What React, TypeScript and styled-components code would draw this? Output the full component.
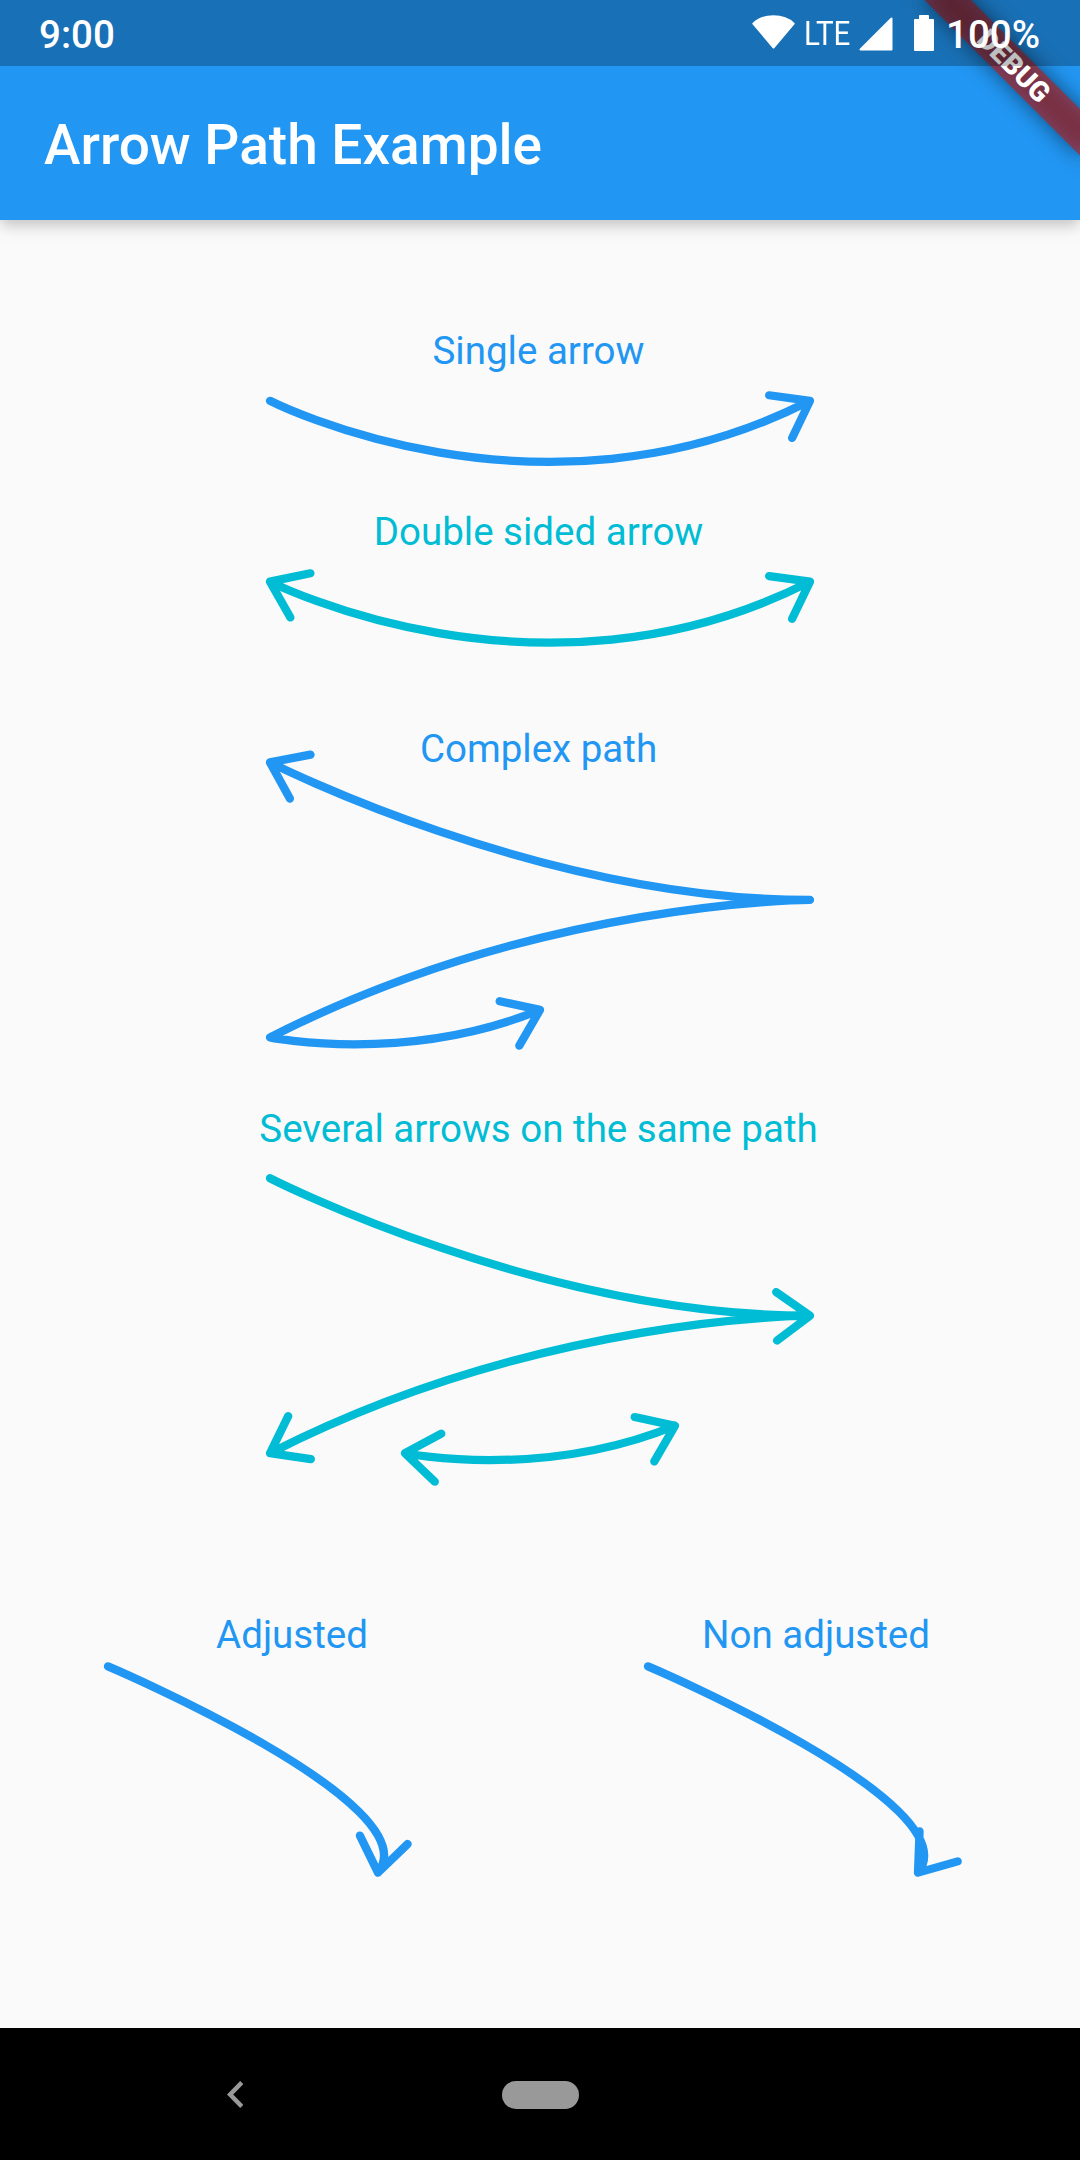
import React from 'react';
import styled, { createGlobalStyle } from 'styled-components';

const BLUE = '#2196f3';
const CYAN = '#00bcd4';

const GlobalStyle = createGlobalStyle`
  * { box-sizing: border-box; }
  body { margin: 0; background: #000; }
`;

const Screen = styled.div`
  position: relative;
  display: flex;
  flex-direction: column;
  width: 1080px;
  height: 2160px;
  overflow: hidden;
  background: #fafafa;
  font-family: Roboto, sans-serif;
`;

const AppBar = styled.header`
  display: flex;
  align-items: center;
  flex: none;
  height: 220px;
  padding: 70px 44px 0;
  background: ${BLUE};
  box-shadow: 0 6px 12px -2px rgba(0, 0, 0, 0.13), 0 8px 16px 0 rgba(0, 0, 0, 0.1);
`;

const Title = styled.h1`
  margin: 0;
  color: #fff;
  font-size: 55px;
  font-weight: 500;
  line-height: 64px;
`;

const BannerCorner = styled.div`
  position: absolute;
  top: 0;
  right: 0;
  width: 240px;
  height: 240px;
  overflow: hidden;
`;

const Ribbon = styled.div`
  position: absolute;
  top: 77px;
  right: -110px;
  display: flex;
  align-items: center;
  justify-content: center;
  width: 220px;
  height: 33px;
  transform: rotate(45deg);
  transform-origin: 110px -77px;

  &::before {
    content: '';
    position: absolute;
    inset: 0;
    background: rgba(0, 0, 0, 0.5);
    filter: blur(10.9px);
  }

  &::after {
    content: '';
    position: absolute;
    inset: 0;
    background: rgba(183, 28, 28, 0.627);
  }
`;

const RibbonText = styled.span`
  position: relative;
  z-index: 1;
  color: #fff;
  font-size: 28px;
  font-weight: 900;
  line-height: 28px;
`;

const StatusBar = styled.div`
  position: absolute;
  top: 0;
  left: 0;
  display: flex;
  align-items: center;
  width: 1080px;
  height: 66px;
  padding: 2px 40px 0 39px;
  background: rgba(0, 0, 0, 0.25);
  color: #fff;
  font-size: 38.5px;
  font-weight: 500;
`;

const StatusIcons = styled.div`
  display: flex;
  align-items: center;
  margin-left: auto;
`;

const Network = styled.span`
  width: 64px;
  padding-left: 9px;
  margin-bottom: 2px;
  font-size: 34px;
  font-weight: 400;
  white-space: nowrap;
  transform: scaleX(0.87);
  transform-origin: 9px 50%;
`;

const StatusGlyph = styled.svg<{ $gap?: number; $lift?: number }>`
  display: block;
  flex: none;
  margin-right: ${(p) => p.$gap ?? 0}px;
  margin-bottom: ${(p) => p.$lift ?? 2}px;
  fill: #fff;
  stroke: #fff;
  stroke-width: 2px;
  stroke-linejoin: round;
`;

const Canvas = styled.main`
  display: flex;
  flex: 1;
  flex-direction: column;
`;

const FigureRow = styled.div`
  display: grid;
  grid-template-columns: 1fr 1fr;
`;

/* The drawing and its label share one grid cell. */
const FigureBox = styled.figure<{ $height: number; $color: string }>`
  display: grid;
  flex: none;
  height: ${(p) => p.$height}px;
  margin: 0;
  color: ${(p) => p.$color};
`;

const Drawing = styled.svg`
  grid-area: 1 / 1;
  display: block;
  overflow: visible;
  fill: none;
  stroke: currentColor;
  stroke-width: 8.25px;
  stroke-linecap: round;
  stroke-linejoin: round;
`;

const Label = styled.figcaption<{ $top: number; $left: number; $right: number }>`
  grid-area: 1 / 1;
  padding: ${(p) => p.$top}px ${(p) => p.$right}px 0 ${(p) => p.$left}px;
  font-size: 38.5px;
  line-height: 46px;
  text-align: center;
`;

const NavBar = styled.nav`
  display: grid;
  grid-template-columns: 1fr 77px 1fr;
  align-items: center;
  flex: none;
  height: 132px;
  padding-top: 1px;
  background: #000;
`;

const BackIcon = styled.svg`
  margin-left: 226.7px;
  fill: #999;
`;

const HomePill = styled.div`
  height: 28px;
  border-radius: 14px;
  background: #999;
`;

type Tip = { x: number; y: number; angle: number };

const TIP_LENGTH = 41.25;
const TIP_ANGLE = 36;

function tipPath({ x, y, angle }: Tip) {
  const arm = (deg: number) => {
    const rad = (deg * Math.PI) / 180;
    return `M${x} ${y}l${(Math.cos(rad) * TIP_LENGTH).toFixed(2)} ${(Math.sin(rad) * TIP_LENGTH).toFixed(2)}`;
  };
  return arm(angle - TIP_ANGLE) + arm(angle + TIP_ANGLE);
}

type FigureProps = {
  label: string;
  color: string;
  width?: number;
  height: number;
  labelTop: number;
  labelLeft?: number;
  labelRight?: number;
  path: string;
  tips: Tip[];
};

function Figure({
  label,
  color,
  width = 1080,
  height,
  labelTop,
  labelLeft = 0,
  labelRight = 0,
  path,
  tips,
}: FigureProps) {
  return (
    <FigureBox $height={height} $color={color}>
      <Drawing width={width} height={height} viewBox={`0 0 ${width} ${height}`}>
        <path d={path + tips.map(tipPath).join('')} />
      </Drawing>
      <Label $top={labelTop} $left={labelLeft} $right={labelRight}>{label}</Label>
    </FigureBox>
  );
}

export default function App() {
  return (
    <>
      <GlobalStyle />
      <Screen>
        <AppBar>
          <Title>Arrow Path Example</Title>
        </AppBar>

        <Canvas>
          <Figure
            label="Single arrow"
            color={BLUE}
            height={270}
            labelTop={108}
            labelRight={3}
            path="M270 180.8c0 0 270 137.5 540 0"
            tips={[{ x: 810, y: 180.8, angle: 151.7 }]}
          />
          <Figure
            label="Double sided arrow"
            color={CYAN}
            height={200}
            labelTop={19}
            labelRight={3}
            path="M270 91.6c0 0 270 137.5 540 0"
            tips={[
              { x: 270, y: 91.6, angle: 24.4 },
              { x: 810, y: 91.6, angle: 151.7 },
            ]}
          />
          <Figure
            label="Complex path"
            color={BLUE}
            height={390}
            labelTop={36}
            labelRight={3}
            path="M270 72.4c0 0 270 137.5 540 137.5c0 0 -270 0 -540 137.5c0 0 135 27.5 270 -27.5"
            tips={[
              { x: 270, y: 72.4, angle: 25.2 },
              { x: 540, y: 319.9, angle: 156.1 },
            ]}
          />
          <Figure
            label="Several arrows on the same path"
            color={CYAN}
            height={480}
            labelTop={26}
            labelRight={3}
            path="M270 98.2c0 0 270 137.5 540 137.5c0 0 -270 0 -540 137.5M405 373.2c0 0 135 27.5 270 -27.5"
            tips={[
              { x: 810, y: 235.7, angle: 179 },
              { x: 270, y: 373.2, angle: -27.8 },
              { x: 405, y: 373.2, angle: 7.7 },
              { x: 675, y: 345.7, angle: 156.1 },
            ]}
          />
          <FigureRow>
            <Figure
              label="Adjusted"
              color={BLUE}
              width={540}
              height={468}
              labelTop={52}
              labelLeft={44}
              path="M108 106.4c0 0 324 137.5 270 206.25"
              tips={[{ x: 378, y: 312.65, angle: 280 }]}
            />
            <Figure
              label="Non adjusted"
              color={BLUE}
              width={540}
              height={468}
              labelTop={52}
              labelLeft={12}
              path="M108 106.4c0 0 324 137.5 270 206.25"
              tips={[{ x: 378, y: 312.65, angle: 308.15 }]}
            />
          </FigureRow>
        </Canvas>

        <NavBar>
          <BackIcon width="16.3" height="27" viewBox="8 6 7.41 12" preserveAspectRatio="none">
            <path d="M15.41 7.41 14 6l-6 6 6 6 1.41-1.41L10.83 12z" />
          </BackIcon>
          <HomePill />
        </NavBar>

        <BannerCorner>
          <Ribbon>
            <RibbonText>DEBUG</RibbonText>
          </Ribbon>
        </BannerCorner>

        <StatusBar>
          <span>9:00</span>
          <StatusIcons>
            <StatusGlyph width="43" height="34" viewBox="0 0 43 34" $lift={5}>
              <path d="M21.500 32.500 1.300 8.700C6 4 13 1.300 21.500 1.300S37 4 41.700 8.700z" />
            </StatusGlyph>
            <Network>LTE</Network>
            <StatusGlyph width="34" height="34" viewBox="0 0 34 34" $gap={20.5} $lift={1}>
              <path d="M32.500 1.500V32.500H1.500z" />
            </StatusGlyph>
            <StatusGlyph width="20" height="36" viewBox="0 0 20 36" $gap={12.5}>
              <path d="M6 1h8v4h5v30H1V5h5z" />
            </StatusGlyph>
            <span>100%</span>
          </StatusIcons>
        </StatusBar>
      </Screen>
    </>
  );
}
